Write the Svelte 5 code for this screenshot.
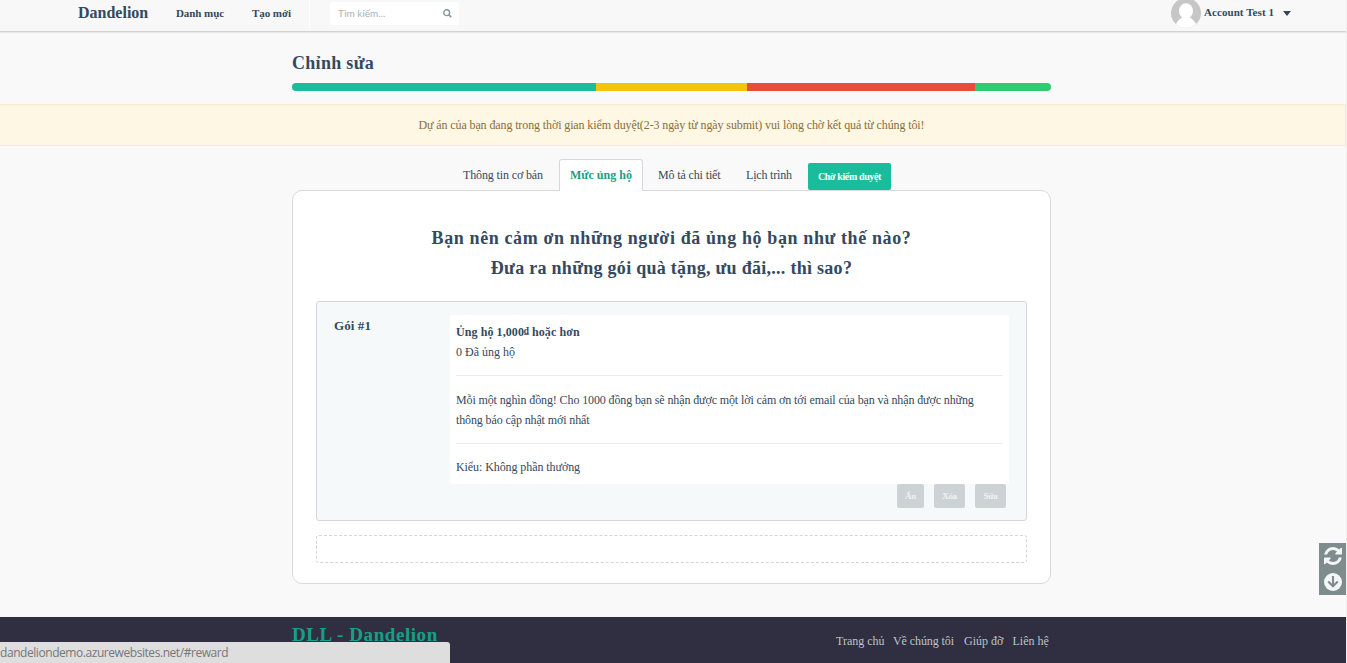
<script>
  const segments = [
    { color: '#1abc9c', width: 304 },
    { color: '#f1c40f', width: 151 },
    { color: '#e74c3c', width: 228 },
    { color: '#2ecc71', width: 76 }
  ];
  const actions = ['Ẩn', 'Xóa', 'Sửa'];
</script>

<div class="page">
  <header>
    <a class="brand">Dandelion</a>
    <a class="nav first">Danh mục</a>
    <a class="nav second">Tạo mới</a>
    <div class="search">
      <span>Tìm kiếm...</span>
      <svg width="9" height="9" viewBox="0 0 9 9"><circle cx="3.7" cy="3.7" r="2.9" fill="none" stroke="#8795a1" stroke-width="1.4" /><path d="M5.9 5.9 8.3 8.3" stroke="#8795a1" stroke-width="1.6" /></svg>
    </div>
    <div class="account">
      <svg class="avatar" width="30" height="30" viewBox="0 0 30 30">
        <defs><clipPath id="face"><circle cx="15" cy="15" r="15" /></clipPath></defs>
        <g clip-path="url(#face)"><rect width="30" height="30" fill="#c6c6c6" /><ellipse cx="15" cy="13" rx="7" ry="7.7" fill="#fff" /><path d="M4 30C5 23 9 21 12 19h6c3 2 7 4 8 11z" fill="#fff" /></g>
      </svg>
      <span class="name">Account Test 1</span>
      <svg class="caret" width="8" height="5" viewBox="0 0 8 5"><path d="M0 0h8L4 5z" fill="#34495e" /></svg>
    </div>
  </header>

  <div class="title"><h1>Chỉnh sửa</h1>
    <div class="progress">
      {#each segments as s}<i style="width:{s.width}px;background:{s.color}"></i>{/each}
    </div>
  </div>

  <div class="alert"><span>Dự án của bạn đang trong thời gian kiểm duyệt(2-3 ngày từ ngày submit) vui lòng chờ kết quả từ chúng tôi!</span></div>

  <main>
    <nav class="tabs">
      <a class="t1">Thông tin cơ bản</a>
      <a class="active">Mức ủng hộ</a>
      <a class="t3">Mô tả chi tiết</a>
      <a class="t4">Lịch trình</a>
      <button class="review">Chờ kiểm duyệt</button>
    </nav>
    <section class="panel">
      <h2><span class="l1">Bạn nên cảm ơn những người đã ủng hộ bạn như thế nào?</span><span class="l2">Đưa ra những gói quà tặng, ưu đãi,... thì sao?</span></h2>
      <div class="reward">
        <h3>Gói #1</h3>
        <div class="detail">
          <div class="card">
            <p class="amount">Ủng hộ 1,000<span class="dong">₫</span> hoặc hơn</p>
            <p class="backers">0 Đã ủng hộ</p>
            <hr />
            <p class="desc">Mỗi một nghìn đồng! Cho 1000 đồng bạn sẽ nhận được một lời cảm ơn tới email của bạn và nhận được những<br />thông báo cập nhật mới nhất</p>
            <hr class="last" />
            <p class="kind">Kiểu: Không phần thưởng</p>
          </div>
          <div class="actions">
            {#each actions as a}<button>{a}</button>{/each}
          </div>
        </div>
      </div>
      <div class="drop"></div>
    </section>
  </main>

  <footer>
    <div class="inner">
      <strong>DLL - Dandelion</strong>
      <div class="links"><a class="f1">Trang chủ</a><a class="f2">Về chúng tôi</a><a class="f3">Giúp đỡ</a><a class="f4">Liên hệ</a></div>
    </div>
  </footer>

  <div class="tools">
    <svg width="18" height="18" viewBox="0 0 1536 1536"><path fill="#f4f5f5" d="M1511 928q0 5-1 7-64 268-268 434.500T764 1536q-146 0-282.500-55T238 1324l-129 129q-19 19-45 19t-45-19-19-45V960q0-26 19-45t45-19h448q26 0 45 19t19 45-19 45l-137 137q71 66 161 102t187 36q134 0 250-65t186-179q11-17 53-117 8-23 30-23h192q13 0 22.500 9.500t9.500 22.500zm25-800v448q0 26-19 45t-45 19h-448q-26 0-45-19t-19-45 19-45l138-138Q969 256 768 256q-134 0-250 65T332 500q-11 17-53 117-8 23-30 23H50q-13 0-22.500-9.500T18 608v-7q65-268 270-434.500T768 0q146 0 284 55.500T1297 212l130-129q19-19 45-19t45 19 19 45z" /></svg>
    <svg width="20" height="20" viewBox="0 0 20 20"><circle cx="10" cy="10" r="9" fill="#f4f5f5" /><path d="M10 4v10M5.200 9.500 10 14.300l4.800-4.800" fill="none" stroke="#7f8c8d" stroke-width="2.100" /></svg>
  </div>
  <div class="status">dandeliondemo.azurewebsites.net/#reward</div>
</div>

<style>
  :global(body) { margin: 0; background: #f9f9f9; }
  .page { position: relative; width: 1347px; height: 663px; box-sizing: border-box; overflow: hidden; border-right: 1px solid #f0f0f0; background: #f9f9f9; color: #34495e; font: 12px/20px "Liberation Serif", serif; }
  h1, h2, h3, p { margin: 0; }
  span, a { white-space: nowrap; }
  button { border: 0; font-family: inherit; color: #fff; padding: 0; white-space: nowrap; }
  header { display: flex; height: 32px; box-sizing: border-box; border-bottom: 1px solid #d2d2d2; box-shadow: 0 1px 1px #e9e9e9; background: #f8f8f8; padding-left: 78px; font-weight: bold; line-height: 27px; }
  .brand { width: 98px; font-size: 16px; line-height: 26px; }
  .nav { font-size: 11px; letter-spacing: -.07px; }
  .first { width: 76px; }
  .second { width: 57px; border-right: 1px solid #fff; height: 30px; }
  .search { display: flex; align-items: center; justify-content: space-between; box-sizing: border-box; width: 129px; height: 23px; margin: 2px 0 0 20px; padding: 0 7px 0 8px; border-radius: 3px; background: #fff; color: #a9b1bb; font: 10px/23px Lato, sans-serif; }
  .account { display: flex; margin-left: auto; width: 175px; font-size: 11px; line-height: 25px; }
  .avatar { margin-top: -2px; }
  .name { margin-left: 3px; width: 79px; letter-spacing: .07px; }
  .caret { margin-top: 11px; }
  .title, main, .inner { width: 759px; margin: 0 auto 0 292px; }
  .title { height: 72px; }
  h1 { padding-top: 19px; font-size: 18px; line-height: 24px; letter-spacing: .3px; }
  .progress { display: flex; height: 8px; margin-top: 8px; border-radius: 4px; overflow: hidden; }
  .alert { height: 42px; box-sizing: border-box; border: 1px solid #faebcc; border-left: 0; background: #fcf8e3; background: #fdf7e3; color: #8a6d3b; line-height: 40px; padding-left: 418.500px; letter-spacing: -.113px; }
  main { padding-top: 13px; }
  .tabs { display: flex; height: 32px; margin-bottom: -1px; padding-left: 171px; line-height: 32px; position: relative; letter-spacing: -.13px; }
  .t1 { width: 96px; }
  .active { width: 84px; box-sizing: border-box; padding-left: 10px; border: 1px solid #d5d8dc; border-bottom: 0; border-radius: 3px 3px 0 0; background: #fff; color: #16a085; font-weight: bold; line-height: 31px; letter-spacing: 0; }
  .t3 { margin-left: 15px; width: 88px; }
  .t4 { width: 62px; letter-spacing: -.18px; }
  .review { width: 83px; height: 27px; margin-top: 4px; border-radius: 2px; background: #1abc9c; font-size: 10px; line-height: 27px; font-weight: bold; letter-spacing: -.38px; }
  .panel { box-sizing: border-box; height: 394px; padding: 32px 23px 0; border: 1px solid #d8dadd; border-radius: 10px; background: #fff; }
  h2 { font-size: 18px; line-height: 30px; height: 78px; text-align: center; }
  h2 span { display: block; }
  .l1 { letter-spacing: .61px; }
  .l2 { letter-spacing: .28px; }
  .reward { display: flex; box-sizing: border-box; height: 220px; padding: 13px 17px 0; border: 1px solid #d3d7da; border-radius: 3px; background: #f5f9fa; }
  h3 { width: 116px; font-size: 13px; line-height: 22px; letter-spacing: .1px; }
  .card { box-sizing: border-box; width: 559px; height: 169px; padding: 7px 6px 0; border-radius: 2px; background: #fff; }
  .amount { height: 20px; font-weight: bold; letter-spacing: .08px; }
  .dong { font-size: 9.500px; line-height: 9px; vertical-align: 2px; }
  .desc { letter-spacing: -.119px; white-space: nowrap; }
  .kind { letter-spacing: -.08px; }
  hr { height: 1px; margin: 13px 0 14px; border: 0; background: #ececec; }
  .last { margin-bottom: 13px; }
  .actions { display: flex; justify-content: flex-end; gap: 10px; padding-right: 3px; }
  .actions button { height: 24px; width: 31px; border-radius: 2px; background: #cdd3d5; color: #eff2f3; font-size: 9px; font-weight: bold; letter-spacing: -.3px; }
  .actions button:first-child { width: 27px; }
  .drop { box-sizing: border-box; height: 28px; margin-top: 14px; border: 1px dashed #d5d5d5; border-radius: 3px; }
  footer { margin-top: 33px; height: 46px; background: #2f2f41; }
  .inner { display: flex; }
  strong { color: #16a085; font-size: 19px; line-height: 36px; letter-spacing: .57px; width: 544px; }
  .links { display: flex; color: #bdc3c7; line-height: 48px; }
  .f1 { width: 57px; } .f2 { width: 71px; letter-spacing: -.08px; } .f3 { width: 48.500px; }
  .tools { position: absolute; right: 0; top: 543px; width: 27px; height: 52px; display: flex; flex-direction: column; align-items: center; justify-content: space-around; background: #7f8c8d; }
  .status { position: absolute; left: 0; bottom: 0; width: 450px; height: 21px; border-radius: 0 3px 0 0; background: #dedede; color: #777; font: 12px/22px "Open Sans", sans-serif; letter-spacing: -.44px; }
</style>
